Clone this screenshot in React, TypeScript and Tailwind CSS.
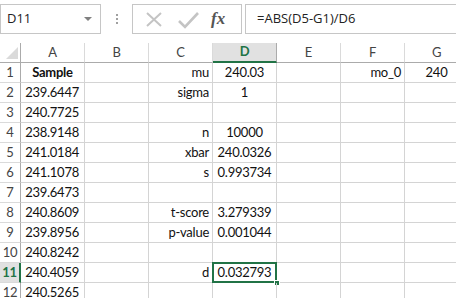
import React from 'react';

const cols = ['A', 'B', 'C', 'D', 'E', 'F', 'G'];

type Row = { a?: string; c?: string; d?: string; f?: string; g?: string; bold?: boolean };

const rows: Row[] = [
  { a: 'Sample', c: 'mu', d: '240.03', f: 'mo_0', g: '240', bold: true },
  { a: '239.6447', c: 'sigma', d: '1' },
  { a: '240.7725' },
  { a: '238.9148', c: 'n', d: '10000' },
  { a: '241.0184', c: 'xbar', d: '240.0326' },
  { a: '241.1078', c: 's', d: '0.993734' },
  { a: '239.6473' },
  { a: '240.8609', c: 't-score', d: '3.279339' },
  { a: '239.8956', c: 'p-value', d: '0.001044' },
  { a: '240.8242' },
  { a: '240.4059', c: 'd', d: '0.032793' },
  { a: '240.5265' },
];

const cell = 'h-[20px] border-r border-b border-[#d4d4d4] flex items-center px-[3px] whitespace-nowrap';

const FormulaBar = () => (
  <div className="flex items-start h-[43px] pt-[4px] font-['Open_Sans',sans-serif] text-[#222]">
    <div className="w-[101px] h-[30px] border border-[#c6c6c6] flex items-center pl-[6px] text-[13px] relative">
      D11
      <span className="absolute right-[8px] top-[12px] w-0 h-0 border-l-[4px] border-r-[4px] border-t-[4px] border-l-transparent border-r-transparent border-t-[#808080]" />
    </div>
    <div className="w-[31px] h-[30px] flex flex-col items-center justify-center gap-[2px]">
      <span className="w-[2px] h-[2px] bg-[#a0a0a0]" />
      <span className="w-[2px] h-[2px] bg-[#a0a0a0]" />
      <span className="w-[2px] h-[2px] bg-[#a0a0a0]" />
    </div>
    <div className="w-[110px] h-[30px] border border-[#c6c6c6] flex items-center">
      <svg width="34" height="28" viewBox="0 0 34 28" className="ml-[4px]">
        <path d="M10 8 L24 21 M24 8 L10 21" stroke="#c4c4c4" strokeWidth="2" fill="none" />
      </svg>
      <svg width="34" height="28" viewBox="0 0 34 28">
        <path d="M8 16 L14 22 L27 8" stroke="#c4c4c4" strokeWidth="2.6" fill="none" />
      </svg>
      <span className="ml-[6px] font-['Liberation_Serif',serif] italic font-bold text-[17px] text-[#555]">fx</span>
    </div>
    <div className="ml-[3px] flex-1 h-[30px] border border-[#c6c6c6] border-r-0 flex items-center pl-[11px] text-[13px]">
      =ABS(D5-G1)/D6
    </div>
  </div>
);

export default function App() {
  return (
    <div className="w-[456px] h-[298px] overflow-hidden bg-white">
      <FormulaBar />
      <div className="grid grid-cols-[21px_64px_64px_64px_64px_64px_64px_64px] font-['Lato',sans-serif] text-[13px] tracking-[-0.25px] text-[#111]">
        {/* header row */}
        <div className="h-[20px] border-r border-b border-[#ababab] relative">
          <svg width="12" height="12" viewBox="0 0 12 12" className="absolute right-[2px] bottom-[3px]">
            <path d="M12 0 L12 12 L0 12 Z" fill="#dadada" />
          </svg>
        </div>
        {cols.map((c) =>
          c === 'D' ? (
            <div key={c} className="h-[20px] bg-[#e1e1e1] border-r border-[#ababab] border-b-2 border-b-[#217346] flex items-center justify-center text-[13px] font-bold text-[#217346]">
              {c}
            </div>
          ) : (
            <div key={c} className="h-[20px] border-r border-[#dadada] border-b border-b-[#ababab] flex items-center justify-center text-[13px] text-[#444]">
              {c}
            </div>
          )
        )}
        {rows.map((r, i) => {
          const sel = i === 10;
          return (
            <React.Fragment key={i}>
              <div
                className={
                  sel
                    ? 'h-[20px] bg-[#e1e1e1] border-r-2 border-r-[#217346] border-b border-b-[#dadada] flex items-center justify-center text-[13px] font-bold text-[#217346]'
                    : 'h-[20px] border-r border-r-[#ababab] border-b border-b-[#dadada] flex items-center justify-center text-[13px] text-[#444]'
                }
              >
                {i + 1}
              </div>
              <div className={`${cell} ${r.bold ? 'justify-center font-bold' : 'justify-end pr-[5px]'}`}>{r.a}</div>
              <div className={cell} />
              <div className={`${cell} justify-end`}>{r.c}</div>
              <div className={`${cell} justify-center relative`}>
                {r.d}
                {sel && (
                  <>
                    <span className="absolute left-[-1px] top-[-1px] right-[-1px] bottom-[-1px] border-2 border-[#217346]" />
                    <span className="absolute right-[-4px] bottom-[-4px] w-[6px] h-[6px] bg-[#217346] border border-white" />
                  </>
                )}
              </div>
              <div className={cell} />
              <div className={`${cell} justify-end`}>{r.f}</div>
              <div className={`${cell} justify-center`}>{r.g}</div>
            </React.Fragment>
          );
        })}
      </div>
    </div>
  );
}
